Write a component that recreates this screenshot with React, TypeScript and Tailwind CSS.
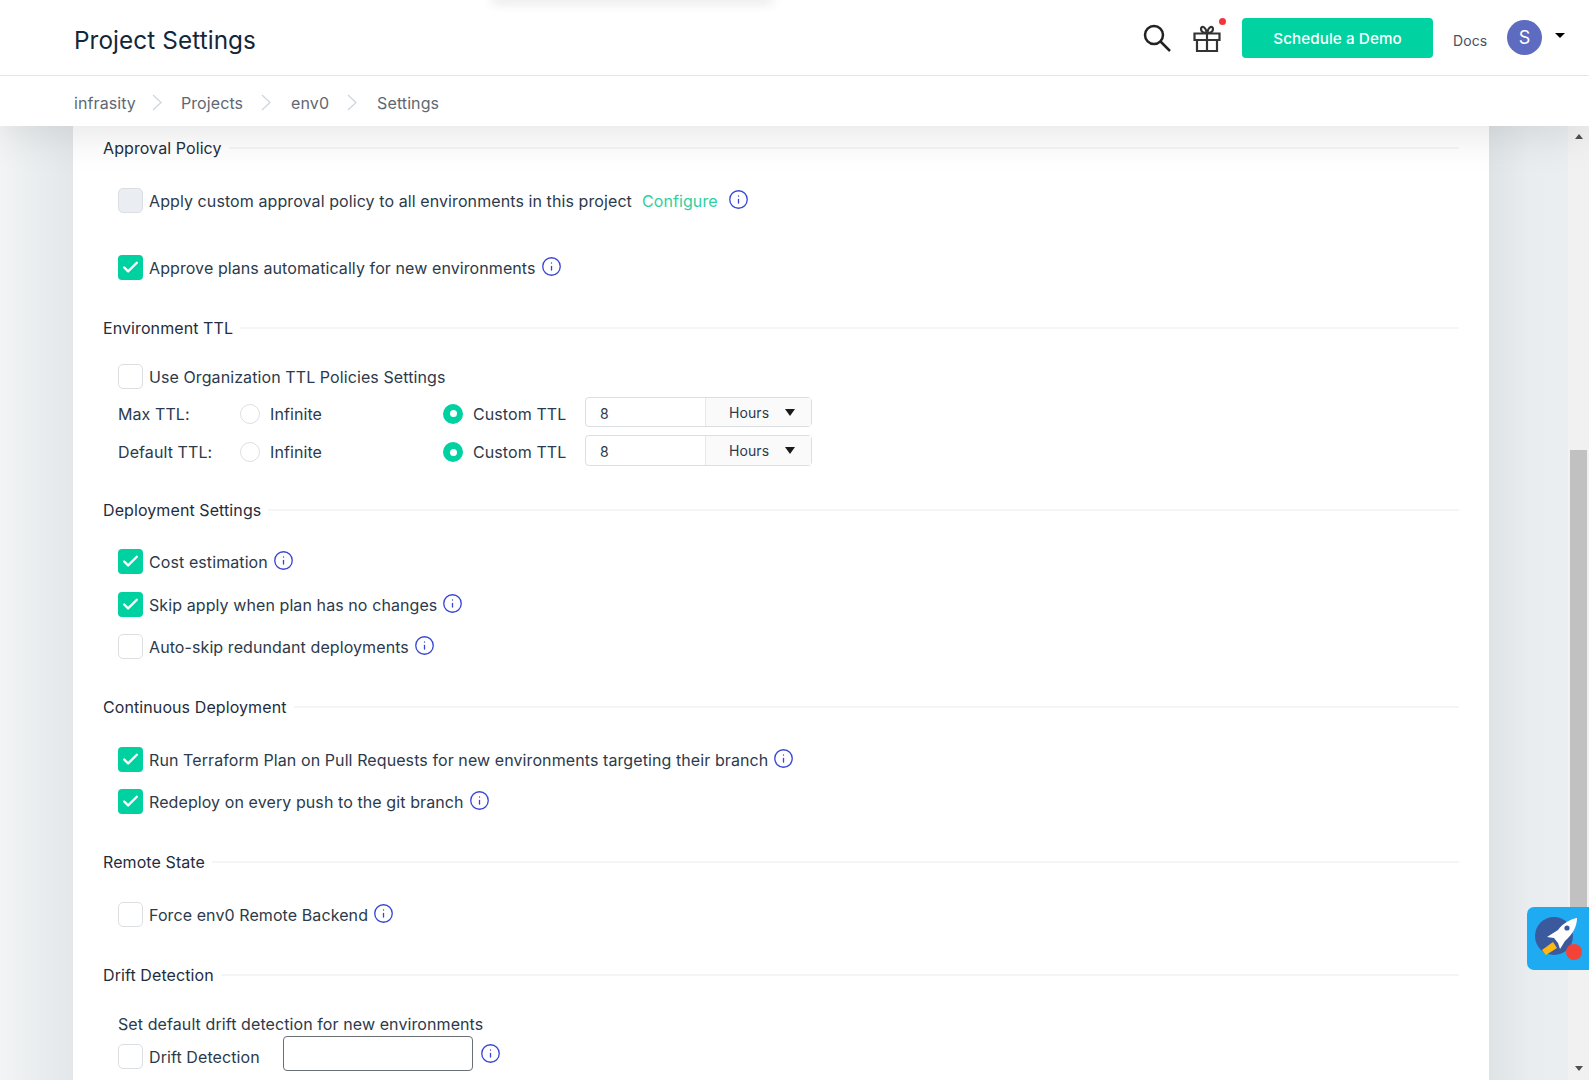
import { Check, Info } from "lucide-react";
import type { ReactNode } from "react";

const font = { fontFamily: '"Inter", "Liberation Sans", sans-serif' };

function SectionTitle({ title, className }: { title: string; className: string }) {
	return (
		<div className={`flex h-[22px] items-center gap-[7px] ${className}`}>
			<span className="text-[16px] text-[#1f2d3d]">{title}</span>
			<div className="-mt-px h-[2px] flex-1 bg-[#f5f5f5]" />
		</div>
	);
}

function InfoIcon({ className = "" }: { className?: string }) {
	return <Info size={21} strokeWidth={1.5} className={`shrink-0 text-[#3646d4] ${className}`} />;
}

function Checkbox({ checked, disabled }: { checked?: boolean; disabled?: boolean }) {
	if (checked) {
		return (
			<span className="flex h-[25px] w-[25px] shrink-0 items-center justify-center rounded-[4px] bg-[#00d1a0]">
				<Check size={19} strokeWidth={3} className="text-white" />
			</span>
		);
	}
	return (
		<span
			className={`h-[25px] w-[25px] shrink-0 rounded-[5px] border border-[#dcdfe2] ${disabled ? "bg-[#eaedf1]" : "bg-white"}`}
		/>
	);
}

function CheckRow({
	label,
	checked,
	disabled,
	className,
	children,
}: {
	label: string;
	checked?: boolean;
	disabled?: boolean;
	className: string;
	children?: ReactNode;
}) {
	return (
		<div className={`ml-[15px] flex h-[26px] items-center ${className}`}>
			<Checkbox checked={checked} disabled={disabled} />
			<span className="ml-[6px] mt-[1px] text-[16px] text-[#2c3a4b]">{label}</span>
			{children ?? <InfoIcon className="ml-[5px] -mt-[1px]" />}
		</div>
	);
}

function Radio({ on }: { on?: boolean }) {
	if (on) {
		return (
			<span className="flex h-[20px] w-[20px] items-center justify-center rounded-full bg-[#00d1a0]">
				<span className="h-[7px] w-[7px] rounded-full bg-white" />
			</span>
		);
	}
	return <span className="h-[20px] w-[20px] rounded-full border border-[#dcdfe2] bg-white" />;
}

function TtlRow({ label, className }: { label: string; className: string }) {
	return (
		<div className={`ml-[15px] flex items-center text-[16px] text-[#2c3a4b] ${className}`}>
			<div className="flex items-center pt-[3px]">
				<span className="w-[122px]">{label}</span>
				<Radio />
				<span className="ml-[10px] w-[173px]">Infinite</span>
				<Radio on />
				<span className="ml-[10px] w-[112px]">Custom TTL</span>
			</div>
			<div className="flex h-full w-[227px] rounded-[4px] border border-[#dcdfe2] text-[14px]">
				<span className="flex w-[119px] items-center pl-[14px] pt-[2px]">8</span>
				<div className="flex flex-1 items-center border-l border-[#e6e8ea] bg-[#fafafa] pl-[23px]">
					<span className="w-[56px]">Hours</span>
					<span className="h-0 w-0 border-x-[5.5px] border-t-[7px] border-x-transparent border-t-[#1a1a1a]" />
				</div>
			</div>
		</div>
	);
}

function Crumb({ text, chevron }: { text: string; chevron?: string }) {
	return (
		<>
			<span>{text}</span>
			{chevron && (
				<svg viewBox="0 0 10 17" className={`h-[17px] w-[10px] ${chevron}`} fill="none" stroke="#c9d6e3" strokeWidth="1.2">
					<path d="M1 1L9 8.500L1 16" />
				</svg>
			)}
		</>
	);
}

function Rocket() {
	return (
		<svg viewBox="0 0 62 63" className="h-full w-full">
			<circle cx="27" cy="29" r="19" fill="#3b5a9e" />
			<path d="M26 35L15 43L19 48L30 41Z" fill="#fdb813" />
			<path d="M50 11C44 12 36 16 31 23L20 30L27 31L31 36L33 42L38 34C46 27 50 19 50 11Z" fill="#fff" />
			<circle cx="40" cy="21" r="2.6" fill="#3b5a9e" />
			<circle cx="47" cy="45" r="8" fill="#f44336" />
		</svg>
	);
}

export default function App() {
	return (
		<div className="relative flex h-[1080px] flex-col overflow-hidden bg-white tracking-[0.09px]" style={font}>
			<div className="absolute -top-px left-[495px] z-40 h-px w-[275px] shadow-[0_0_12px_3px_rgba(0,0,0,0.12)]" />

			<header className="relative z-30 flex h-[76px] shrink-0 items-center border-b border-[#e6e6e6] bg-white pl-[74px]">
				<h1 className="mt-[6px] text-[24.300px] font-normal text-[#14263a]">Project Settings</h1>
				<div className="ml-auto flex items-center">
					<svg viewBox="0 0 28 28" className="h-[28px] w-[28px]" fill="none" stroke="#222" strokeWidth="2.5">
						<circle cx="11" cy="11" r="9" />
						<path d="M17.5 17.5L27 27" />
					</svg>
					<div className="relative ml-[22px]">
						<svg viewBox="0 0 28 28" className="h-[28px] w-[28px]" fill="none" stroke="#333" strokeWidth="2.2">
							<path d="M1.5 9.5H26.5V16H1.5ZM4 16V27H24V16M14 9.5V27" />
							<path d="M14 9C11 9 8 8 8 5C8 2 12 1.500 14 9C16 1.500 20 2 20 5C20 8 17 9 14 9Z" />
						</svg>
						<span className="absolute -right-[5px] -top-[6px] h-[7px] w-[7px] rounded-full bg-[#f5333f]" />
					</div>
					<button className="ml-[21px] h-[40px] w-[191px] rounded-[4px] bg-[#00d3a1] pt-[3px] text-[15.200px] font-medium text-white">
						Schedule a Demo
					</button>
					<span className="ml-[20px] mt-[6px] w-[33px] text-[14px] text-[#46525f]">Docs</span>
					<span className="ml-[21px] flex h-[35px] w-[35px] items-center justify-center rounded-full bg-[#5d6bc0] text-[18px] text-white">
						S
					</span>
					<span className="ml-[13px] mr-[24px] h-0 w-0 -translate-y-[2px] border-x-[5px] border-t-[5px] border-x-transparent border-t-black" />
				</div>
			</header>

			<nav className="relative z-20 flex h-[50px] shrink-0 items-center bg-white pl-[74px] pt-[3px] text-[16px] text-[#5e6873] shadow-[0_0_50px_rgba(0,0,0,0.14)]">
				<Crumb text="infrasity" chevron="ml-[16px] mr-[19px]" />
				<Crumb text="Projects" chevron="ml-[18px] mr-[20px]" />
				<Crumb text="env0" chevron="ml-[18px] mr-[20px]" />
				<Crumb text="Settings" />
			</nav>

			<div className="flex min-h-0 flex-1">
				<main className="min-w-0 flex-1 overflow-hidden bg-[linear-gradient(90deg,#f2f4f5_0px,#e3e7ea_73px,#dee3e6_1489px,#e9edf0_1530px,#ebeef0_1568px)] pl-[73px] pr-[79px]">
					<div className="h-[1000px] bg-white pl-[30px] pr-[30px] pt-[11px]">
						<SectionTitle title="Approval Policy" className="" />
						<CheckRow
							label="Apply custom approval policy to all environments in this project"
							disabled
							className="mt-[28px]"
						>
							<span className="ml-[10px] mt-[1px] text-[16px] text-[#2fcf9f]">Configure</span>
							<InfoIcon className="ml-[10px] -mt-[1px]" />
						</CheckRow>
						<CheckRow label="Approve plans automatically for new environments" checked className="mt-[41px]" />

						<SectionTitle title="Environment TTL" className="mt-[37px]" />
						<CheckRow label="Use Organization TTL Policies Settings" className="mt-[24px]">
							<span />
						</CheckRow>
						<TtlRow label="Max TTL:" className="mt-[8px] h-[30px]" />
						<TtlRow label="Default TTL:" className="mt-[8px] h-[31px]" />

						<SectionTitle title="Deployment Settings" className="mt-[33px]" />
						<CheckRow label="Cost estimation" checked className="mt-[27px]" />
						<CheckRow label="Skip apply when plan has no changes" checked className="mt-[17px]" />
						<CheckRow label="Auto-skip redundant deployments" className="mt-[16px]" />

						<SectionTitle title="Continuous Deployment" className="mt-[37px]" />
						<CheckRow
							label="Run Terraform Plan on Pull Requests for new environments targeting their branch"
							checked
							className="mt-[28px]"
						/>
						<CheckRow label="Redeploy on every push to the git branch" checked className="mt-[16px]" />

						<SectionTitle title="Remote State" className="mt-[37px]" />
						<CheckRow label="Force env0 Remote Backend" className="mt-[28px]" />

						<SectionTitle title="Drift Detection" className="mt-[37px]" />
						<p className="ml-[15px] mt-[26px] h-[24px] text-[16px] text-[#2c3a4b]">
							Set default drift detection for new environments
						</p>
						<div className="ml-[15px] flex h-[35px] items-center">
							<div className="flex items-center pt-[6px]">
								<Checkbox />
								<span className="ml-[6px] mt-[1px] w-[134px] text-[16px] text-[#2c3a4b]">Drift Detection</span>
							</div>
							<div className="h-[35px] w-[190px] rounded-[4px] border border-[#6b7075] bg-white" />
							<InfoIcon className="ml-[7px]" />
						</div>
					</div>
				</main>

				<aside className="flex w-[21px] shrink-0 flex-col items-center bg-[#f1f1f1]">
					<span className="mt-[8px] h-0 w-0 border-x-[4.500px] border-b-[5px] border-x-transparent border-b-[#505050]" />
					<div className="mt-[311px] h-[500px] w-[17px] bg-[#c1c1c1]" />
					<span className="mb-[9px] mt-auto h-0 w-0 border-x-[4.500px] border-t-[5px] border-x-transparent border-t-[#505050]" />
				</aside>
			</div>

			<div className="absolute right-0 top-[907px] z-40 h-[63px] w-[62px] overflow-hidden rounded-l-[7px] bg-[#1eabf1]">
				<Rocket />
			</div>
		</div>
	);
}
